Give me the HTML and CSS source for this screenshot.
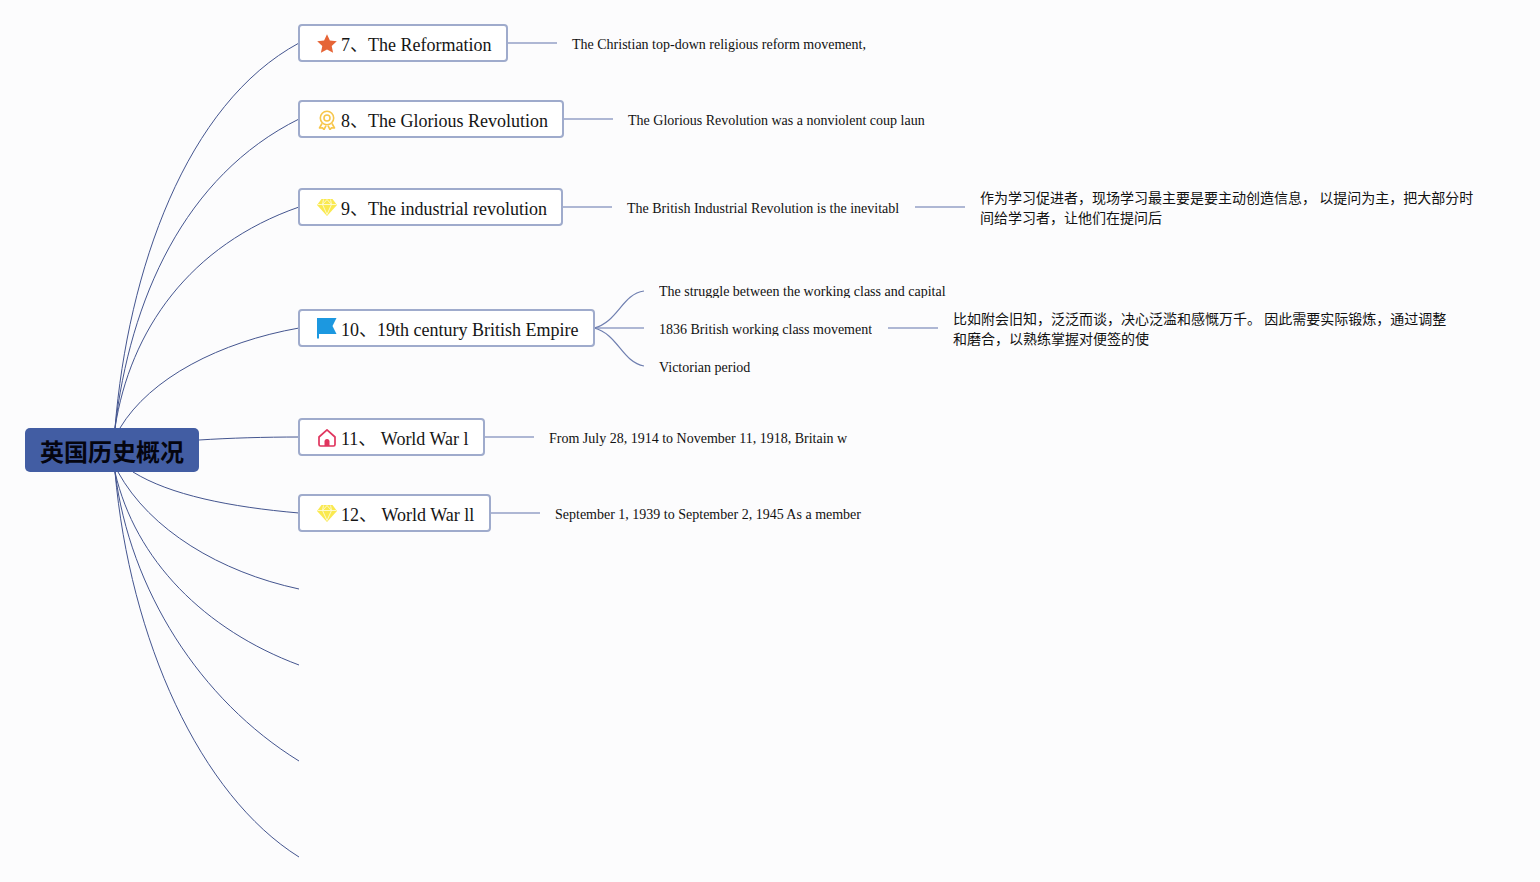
FILE: index.html
```html
<!DOCTYPE html>
<html lang="zh">
<head>
<meta charset="utf-8">
<title>英国历史概况</title>
<link rel="stylesheet" href="styles.css">
</head>
<body>
<main class="canvas">
  <svg class="links" width="1540" height="882" viewBox="0 0 1540 882">
    <g class="main-links">
      <path d="M115 428C128 270 186 104 299 43"/>
      <path d="M115 428C130 300 184 176 299 119"/>
      <path d="M115 428C130 330 190 245 299 207"/>
      <path d="M120 428C150 378 220 342 299 328"/>
      <path d="M199 440C230 438 265 437 299 437"/>
      <path d="M133 472C170 495 230 507 299 513"/>
      <path d="M118 472C150 530 220 572 299 589"/>
      <path d="M115 472C135 560 205 630 299 665"/>
      <path d="M115 472C130 590 200 700 299 761"/>
      <path d="M115 472C130 640 200 795 299 857"/>
    </g>
    <g class="sub-links">
      <path d="M507 43H557"/>
      <path d="M563 119H613"/>
      <path d="M562 207H612"/>
      <path d="M915 207H965"/>
      <path d="M594 328H644"/>
      <path d="M888 328H938"/>
      <path d="M484 437H534"/>
      <path d="M490 513H540"/>
      <path class="thin" d="M594 328C618 322 622 294 644 291"/>
      <path class="thin" d="M594 328C618 334 622 362 644 366"/>
    </g>
  </svg>

  <div class="root">英国历史概况</div>

  <div class="node n7">
    <svg class="icon" viewBox="0 0 20 20"><path fill="#e66436" d="M10 .2l2.900 6.300 6.900.8-5.100 4.600 1.400 6.900L10 15.400l-6.100 3.400 1.400-6.900L.2 7.300l6.900-.8z"/></svg>
    <span class="label">7、The Reformation</span>
  </div>
  <div class="node n8">
    <svg class="icon" viewBox="0 0 20 20" fill="none" stroke="#f7c64b" stroke-width="1.600"><circle cx="10" cy="8" r="6.700"/><circle cx="10" cy="8" r="3"/><path stroke-linejoin="round" d="M5 13.500l-2.500 4.500 3-.3 1.500 2 2-4M15 13.500l2.500 4.500-3-.3-1.500 2-2-4"/></svg>
    <span class="label">8、The Glorious Revolution</span>
  </div>
  <div class="node n9">
    <svg class="icon gem" viewBox="0 0 20 20"><path fill="#fae94f" d="M4.500 2h11L20 8 10 19 0 8z"/><path fill="none" stroke="#fdfbd8" stroke-width=".9" d="M.8 7.500h18.400M6.500 2.500L5.500 7.500l4.500 10 4.500-10-1-5M5.500 7.500L10 2.500l4.500 5"/></svg>
    <span class="label">9、The industrial revolution</span>
  </div>
  <div class="node n10">
    <svg class="icon flag" viewBox="0 0 20 22"><path fill="#1c98e0" d="M0 1h19.500l-4 8 4 8H2v4.500H0z"/></svg>
    <span class="label">10、19th century British Empire</span>
  </div>
  <div class="node n11">
    <svg class="icon" viewBox="0 0 20 20"><path fill="none" stroke="#e0355e" stroke-width="1.700" stroke-linejoin="round" d="M2 9L10 1.800 18 9v7.500a1.500 1.500 0 0 1-1.500 1.500h-13A1.500 1.500 0 0 1 2 16.500z"/><path fill="#e0355e" d="M7.500 18v-4.500a2.500 2.500 0 0 1 5 0V18z"/></svg>
    <span class="label">11、 World War l</span>
  </div>
  <div class="node n12">
    <svg class="icon gem" viewBox="0 0 20 20"><path fill="#fae94f" d="M4.500 2h11L20 8 10 19 0 8z"/><path fill="none" stroke="#fdfbd8" stroke-width=".9" d="M.8 7.500h18.400M6.500 2.500L5.500 7.500l4.500 10 4.500-10-1-5M5.500 7.500L10 2.500l4.500 5"/></svg>
    <span class="label">12、 World War ll</span>
  </div>

  <p class="note t7">The Christian top-down religious reform movement,</p>
  <p class="note t8">The Glorious Revolution was a nonviolent coup laun</p>
  <p class="note t9">The British Industrial Revolution is the inevitabl</p>
  <p class="note cjk t9b">作为学习促进者，现场学习最主要是要主动创造信息， 以提问为主，把大部分时<br>间给学习者，让他们在提问后</p>
  <p class="note clip t10a">The struggle between the working class and capital</p>
  <p class="note clip t10b">1836 British working class movement</p>
  <p class="note cjk t10d">比如附会旧知，泛泛而谈，决心泛滥和感慨万千。 因此需要实际锻炼，通过调整<br>和磨合，以熟练掌握对便签的使</p>
  <p class="note t10c">Victorian period</p>
  <p class="note t11">From July 28, 1914 to November 11, 1918, Britain w</p>
  <p class="note t12">September 1, 1939 to September 2, 1945 As a member</p>
</main>
</body>
</html>
```
FILE: styles.css
```css
* { box-sizing: border-box; }
html, body { margin: 0; height: 100%; overflow: hidden; }
body { background: #fcfcfd; font-family: "Liberation Serif", "Noto Sans CJK SC", serif; color: #111; }
.canvas { position: relative; width: 1540px; height: 882px; }
.links { position: absolute; left: 0; top: 0; }
.links path { fill: none; }
.main-links path { stroke: #44558f; stroke-width: 1; }
.sub-links path { stroke: #94a1c6; stroke-width: 1.500; }
.sub-links path.thin { stroke: #6f7fb0; stroke-width: 1.200; }

.root {
  position: absolute; left: 25px; top: 428px; width: 174px; height: 44px;
  display: flex; align-items: center; justify-content: center;
  padding-top: 2px;
  background: #425da3; border-radius: 5px;
  color: #05050f; font: 700 24px/1 "Noto Sans CJK SC", sans-serif;
}

.node {
  position: absolute; left: 298px; height: 38px;
  display: flex; align-items: center; gap: 4px; padding-left: 17px;
  background: #fff; border: 2px solid #9fabcc; border-radius: 4px;
}
.icon { width: 20px; height: 20px; flex: none; margin-top: 1px; }
.icon.gem { margin-top: 0; }
.icon.flag { height: 22px; margin-top: 0; }
.label { font: 18px/1 "Liberation Serif", "Noto Sans CJK SC", serif; white-space: pre; color: #151515; padding-top: 3px; }
.n7 { top: 24px; width: 210px; }
.n8 { top: 100px; width: 266px; }
.n9 { top: 188px; width: 265px; }
.n10 { top: 309px; width: 297px; }
.n11 { top: 418px; width: 187px; }
.n12 { top: 494px; width: 193px; }

.note { position: absolute; margin: 0; font-size: 14px; line-height: 20px; white-space: nowrap; color: #111; }
.note.cjk { font-family: "Noto Sans CJK SC", sans-serif; line-height: 20px; }
.note.clip { height: 16px; overflow: hidden; }
.t7 { left: 572px; top: 35px; }
.t8 { left: 628px; top: 111px; }
.t9 { left: 627px; top: 199px; }
.t9b { left: 980px; top: 187px; }
.t10a { left: 659px; top: 282px; }
.t10b { left: 659px; top: 320px; }
.t10c { left: 659px; top: 358px; }
.t10d { left: 953px; top: 308px; }
.t11 { left: 549px; top: 429px; }
.t12 { left: 555px; top: 505px; }
```
